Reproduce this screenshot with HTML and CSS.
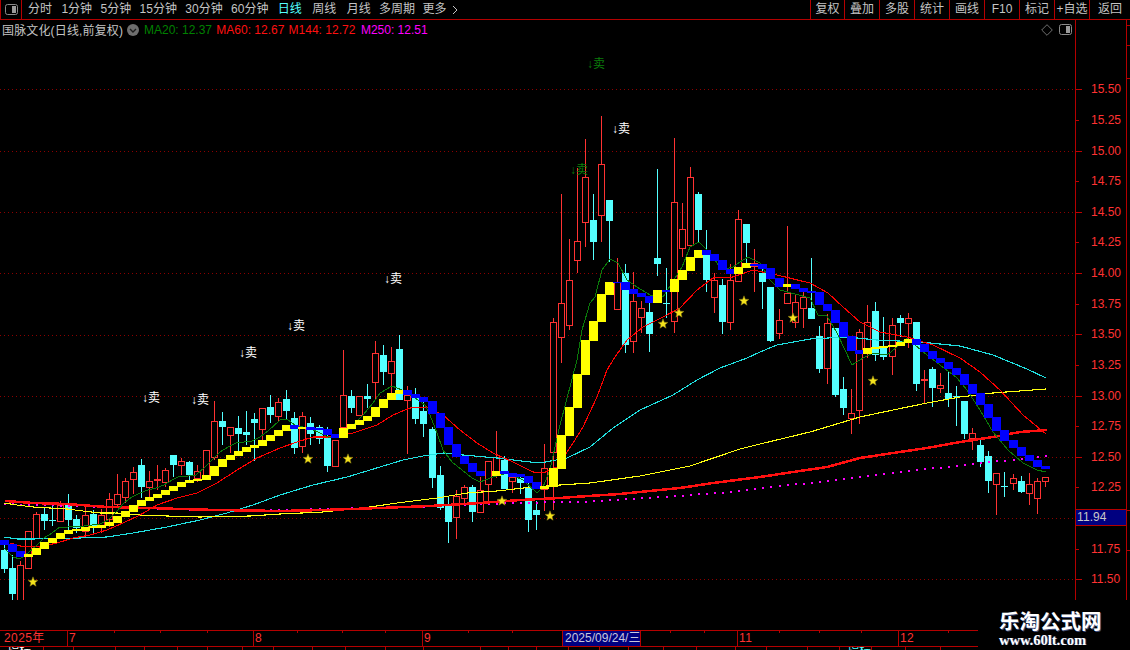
FILE: index.html
```html
<!DOCTYPE html>
<html lang="zh-CN">
<head>
<meta charset="utf-8">
<title>国脉文化 日线</title>
<link rel="stylesheet" href="styles.css">
</head>
<body>
<div class="app">
  <header class="toolbar">
    <div class="panel-cell">
      <svg class="toggle" viewBox="0 0 13 11"><rect x="0.5" y="0.5" width="12" height="10" rx="2" class="toggle-frame"/><rect x="7" y="2" width="4" height="7" class="toggle-fill"/></svg>
    </div>
    <nav class="periods">
      <span class="tab first">分时</span>
      <span class="tab">1分钟</span>
      <span class="tab">5分钟</span>
      <span class="tab">15分钟</span>
      <span class="tab">30分钟</span>
      <span class="tab">60分钟</span>
      <span class="tab active">日线</span>
      <span class="tab apart">周线</span>
      <span class="tab apart">月线</span>
      <span class="tab">多周期</span>
      <span class="tab near">更多</span>
      <svg class="more" viewBox="0 0 6 10"><path d="M1 1l4 4-4 4"/></svg>
    </nav>
    <div class="tools">
      <span class="tool narrow">复权</span>
      <span class="tool">叠加</span>
      <span class="tool">多股</span>
      <span class="tool">统计</span>
      <span class="tool">画线</span>
      <span class="tool">F10</span>
      <span class="tool">标记</span>
      <span class="tool">+自选</span>
      <span class="tool last">返回</span>
    </div>
  </header>

  <main class="main">
    <section class="plot">
      <svg id="chart" class="chart" viewBox="0 20 1075 580">
        <g class="sell">
          <text x="142" y="402">↓卖</text>
          <text x="191" y="404">↓卖</text>
          <text x="239" y="357">↓卖</text>
          <text x="287" y="330">↓卖</text>
          <text x="384" y="283">↓卖</text>
          <text x="612" y="133">↓卖</text>
        </g>
        <g class="sell dim">
          <text x="587" y="68">↓卖</text>
          <text x="570" y="174">↓卖</text>
        </g>
      </svg>
      <div class="info">
        <span class="name">国脉文化(日线,前复权)</span>
        <svg class="chevron" viewBox="0 0 12 12"><circle cx="6" cy="6" r="6" class="chevron-disc"/><path d="M3 5l3 3 3-3" class="chevron-mark"/></svg>
        <span class="ma green">MA20: 12.37</span>
        <span class="ma red">MA60: 12.67</span>
        <span class="ma red">M144: 12.72</span>
        <span class="ma pink">M250: 12.51</span>
        <svg class="diamond" viewBox="0 0 12 12"><path d="M6 .7L11.3 6 6 11.3.7 6z"/></svg>
        <svg class="toggle small" viewBox="0 0 13 11"><rect x="0.5" y="0.5" width="12" height="10" rx="2" class="toggle-frame"/><rect x="7" y="2" width="4" height="7" class="toggle-fill"/></svg>
      </div>
    </section>
    <aside class="axis">
      <span class="price major">15.50</span>
      <span class="price">15.25</span>
      <span class="price major">15.00</span>
      <span class="price">14.75</span>
      <span class="price major">14.50</span>
      <span class="price">14.25</span>
      <span class="price major">14.00</span>
      <span class="price">13.75</span>
      <span class="price major">13.50</span>
      <span class="price">13.25</span>
      <span class="price major">13.00</span>
      <span class="price">12.75</span>
      <span class="price major">12.50</span>
      <span class="price">12.25</span>
      <span class="price major"></span>
      <span class="price">11.75</span>
      <span class="price major">11.50</span>
      <span class="cursor-price">11.94</span>
    </aside>
    <div class="strip"></div>
  </main>

  <footer class="footer">
    <div class="timeline">
      <div id="dates" class="dates">
        <span class="date year">2025年</span>
        <span class="date m7">7</span>
        <span class="date m8">8</span>
        <span class="date m9">9</span>
        <span class="date current">2025/09/24/三</span>
        <span class="date gap"></span>
        <span class="date m11">11</span>
        <span class="date m12">12</span>
      </div>
      <div id="tabs" class="tabs"></div>
    </div>
    <div class="watermark">
      <div class="mark-name">乐淘公式网</div>
      <div class="mark-url">www.60lt.com</div>
    </div>
  </footer>
</div>
<script src="chart.js"></script>
</body>
</html>
```
FILE: styles.css
```css
* { box-sizing: border-box; }
html, body { margin: 0; padding: 0; background: #000; }
body { width: 1130px; height: 650px; overflow: hidden; font-family: "Liberation Sans", "Noto Sans CJK SC", sans-serif; font-size: 12px; color: #c4c4c4; }
.app { display: flex; flex-direction: column; width: 1130px; height: 650px; }

.toolbar { display: flex; align-items: stretch; height: 20px; border-bottom: 1px solid #b40000; line-height: 19px; flex: none; }
.panel-cell { width: 22px; border-left: 1px solid #b40000; border-right: 1px solid #b40000; display: flex; align-items: center; justify-content: center; }
.toggle { width: 13px; height: 11px; display: block; }
.toggle-frame { fill: none; stroke: #8a8a8a; }
.toggle-fill { fill: #9a9a9a; }
.periods { display: flex; align-items: center; gap: 8.4px; padding-left: 6px; }
.tab { white-space: nowrap; }
.tab.first { margin-right: 1px; }
.tab.active { color: #54ffff; margin-left: 1px; }
.tab.apart { margin-left: 2px; }
.tab.near { margin-left: -1px; }
.more { width: 6px; height: 10px; margin-left: -3px; }
.more path { fill: none; stroke: #c4c4c4; }
.tools { display: flex; margin-left: auto; }
.tool { width: 35px; border-left: 1px solid #b40000; text-align: center; white-space: nowrap; }
.tool.narrow { width: 34px; }
.tool.last { width: 41px; }

.main { display: flex; height: 580px; flex: none; }
.plot { position: relative; width: 1075px; flex: none; }
.chart { display: block; width: 1075px; height: 580px; }
.sell text { font-family: "Liberation Sans", "Noto Sans CJK SC", sans-serif; font-size: 12px; fill: #fff; }
.sell.dim text { fill: #0b7d0b; }
.info { position: absolute; left: 0; top: 0; right: 0; height: 19px; display: flex; align-items: center; padding: 0 3px 0 2px; }
.name { white-space: nowrap; width: 125px; letter-spacing: .15px; }
.chevron { width: 12px; height: 12px; margin-right: 5px; }
.chevron-disc { fill: #6e6e6e; }
.chevron-mark { fill: none; stroke: #1c1c1c; stroke-width: 1.4; }
.ma { white-space: nowrap; width: 72.3px; }
.green { color: #008000; }
.red { color: #ff1010; }
.pink { color: #ff00ff; }
.diamond { width: 12px; height: 12px; margin-left: auto; margin-right: 6px; }
.diamond path { fill: none; stroke: #707070; }

.axis { position: relative; width: 51px; flex: none; border-left: 1px solid #b40000; padding-top: 54.3px; display: flex; flex-direction: column; }
.price { position: relative; height: 30.625px; flex: none; line-height: 30.625px; color: #ff3232; padding-left: 15px; }
.price::before { content: ""; position: absolute; left: 0; top: 15px; width: 3px; height: 1px; background: #c00000; }
.price.major::before { width: 6px; }
.cursor-price { position: absolute; left: 0; top: 489px; width: 50px; height: 17px; line-height: 15px; padding-left: 1px; background: #000080; border-top: 1px solid #b40000; border-bottom: 1px solid #b40000; color: #c8c8c8; letter-spacing: .1px; }
.strip { width: 4px; flex: none; border-left: 1px solid #b40000; background: linear-gradient(#b40000, #b40000) 0 5px / 4px 1px no-repeat, linear-gradient(#b40000, #b40000) 0 25px / 4px 1px no-repeat, linear-gradient(#b40000, #b40000) 0 58px / 4px 1px no-repeat, linear-gradient(#b40000, #b40000) 0 490px / 4px 1px no-repeat, linear-gradient(#b40000, #b40000) 0 530px / 4px 1px no-repeat; }

.footer { display: flex; flex: 1; min-height: 0; }
.timeline { width: 978px; flex: none; padding-top: 30px; display: flex; flex-direction: column; }
.dates { position: relative; display: flex; height: 17px; border-top: 1px solid #b40000; border-bottom: 1px solid #b40000; color: #ff3232; line-height: 15px; flex: none; }
.date { flex: none; padding-left: 1px; border-right: 1px solid #b40000; white-space: nowrap; letter-spacing: .4px; }
.year { width: 68px; padding-left: 4px; }
.m7 { width: 186px; }
.m8 { width: 169px; }
.m9 { width: 140px; }
.current { width: 79px; background: #000080; color: #c8c8dc; border-left: 1px solid #b40000; padding-left: 2px; letter-spacing: 0; margin-left: -1px; }
.gap { width: 97px; }
.m11 { width: 161px; }
.m12 { flex: 1; border-right: 0; }
.date-tick { position: absolute; top: 0; width: 1px; height: 2px; background: #b40000; }
.tabs { display: flex; flex: 1; overflow: hidden; min-height: 0; }
.bar-tab { flex: none; height: 3px; border-right: 1px solid #b40000; overflow: hidden; line-height: 8px; color: #fff; padding-left: 7px; white-space: nowrap; }
.bar-tab.cyan { color: #54ffff; }

.watermark { flex: 1; background: #000; padding: 8px 0 0 21px; color: #fff; }
.mark-name { font-family: "Noto Sans CJK SC", sans-serif; font-weight: 700; font-size: 20.5px; line-height: 24px; text-shadow: 1px 1px 0 #3a4a78; white-space: nowrap; }
.mark-url { font-family: "Liberation Serif", serif; font-weight: 700; font-size: 14.5px; line-height: 16px; text-shadow: 1px 0 0 #3a4a78; white-space: nowrap; }

/* chart marks drawn by chart.js */
.grid { stroke: #8c0000; stroke-width: 1; stroke-dasharray: 1 3; shape-rendering: crispEdges; }
.wick-up { fill: #ff3232; }
.body-up { fill: #000; stroke: #ff3232; stroke-width: 1; }
.cand-down { fill: #54ffff; }
.line { fill: none; shape-rendering: crispEdges; }
.l-green { stroke: #0a7a0a; stroke-width: 1; }
.l-red { stroke: #ff0000; stroke-width: 1.1; }
.l-cyan { stroke: #20e0e0; stroke-width: 1.1; }
.l-yellow { stroke: #ffff10; stroke-width: 1.1; }
.l-thick { stroke: #ff1010; stroke-width: 2.5; }
.dot { fill: #ff00ff; }
.step-y { fill: #ffff00; }
.step-b { fill: #0000ff; }
.star { fill: #f4e31c; stroke: #8a7a10; stroke-width: .5; }
```
FILE: chart.js
```js
// 日K线数据: [类型, 上影, 实体上, 实体下, 下影] (像素坐标)
const candles = [
['c',545,550,569,573],['c',555,568,594,603],['r',561,565,608,608],['r',531,531,569,569],['r',512,514,539,539],
['c',507,514,521,530],['c',506,520,521,526],['r',501,505,522,522],['c',494,505,520,530],['c',515,519,528,533],
['r',505,515,532,537],['c',510,514,527,533],['r',509,515,528,533],['r',493,499,520,527],['r',474,494,505,508],
['r',478,481,498,503],['r',467,472,480,494],['c',459,465,487,498],['r',471,481,488,498],['r',465,479,481,490],
['r',468,470,483,487],['c',455,455,465,477],['r',458,461,466,475],['c',461,462,475,483],['r',465,471,479,482],
['r',450,450,477,480],['r',401,421,458,460],['c',412,421,427,445],['r',427,427,436,453],['c',416,428,434,452],
['c',411,432,435,445],['c',413,419,423,461],['r',408,408,430,440],['c',395,407,415,423],['r',398,402,417,422],
['c',390,399,411,420],['c',412,418,448,454],['r',412,416,447,453],['c',417,423,434,445],['c',425,427,439,444],
['c',427,438,466,472],['r',440,440,467,467],['r',350,395,428,428],['c',390,396,408,413],['r',396,396,416,416],
['c',384,396,399,408],['r',341,353,383,399],['c',345,355,372,385],['r',347,361,374,393],['c',335,349,400,400],
['r',386,395,401,454],['c',388,398,419,424],['c',402,411,424,437],['c',427,429,478,488],['c',466,475,508,510],
['c',496,506,522,543],['r',490,496,518,539],['r',485,487,499,506],['c',485,487,512,522],['r',477,490,513,513],
['r',461,461,485,505],['r',431,457,475,478],['c',456,460,489,489],['r',475,477,482,493],['c',475,478,483,494],
['c',483,487,520,532],['c',501,510,515,530],['r',444,468,490,511],['r',318,322,453,510],['r',194,303,338,363],
['r',239,280,326,330],['r',168,241,261,273],['r',139,177,223,247],['c',194,220,242,260],['r',116,164,216,242],
['c',200,200,221,262],['r',258,282,310,310],['c',264,273,345,353],['r',272,301,342,353],['r',301,308,318,333],
['c',303,312,334,352],['c',169,258,264,276],['c',268,303,304,318],['r',138,202,322,333],['r',203,229,249,257],
['r',167,177,246,246],['c',192,194,230,242],['c',230,255,280,292],['r',273,280,298,313],['c',279,285,322,334],
['r',264,280,323,330],['r',210,219,282,282],['c',224,224,243,267],['r',249,263,267,292],['c',268,273,282,309],
['c',287,287,341,342],['r',309,320,334,339],['r',226,293,304,304],['r',295,302,323,328],['r',292,297,309,328],
['c',258,308,319,319],['c',326,336,369,373],['r',314,323,369,384],['c',328,328,395,397],['c',377,389,408,415],
['r',389,413,419,434],['r',329,332,411,424],['r',305,322,353,358],['c',302,311,355,361],['c',317,348,357,360],
['r',318,325,357,375],['c',315,318,323,337],['r',313,318,324,348],['c',322,322,384,391],['r',370,379,381,404],
['c',367,369,388,407],['r',373,385,389,393],['c',372,393,399,407],['c',386,396,397,426],['c',401,401,434,439],
['r',428,433,439,450],['c',440,445,462,467],['c',451,456,481,493],['r',473,473,485,515],['c',472,486,487,497],
['r',474,478,484,490],['c',476,481,492,493],['r',473,484,494,505],['r',478,481,499,514],['r',477,477,482,487]
];

// 阶梯带: [上, 下, 颜色]
const steps = [
[540,545,'b'],[544,552,'b'],[551,557,'b'],[554,557,'y'],[548,555,'y'],[542,549,'y'],[538,543,'y'],[533,539,'y'],[530,534,'y'],[529,531,'y'],
[527,531,'y'],[526,528,'y'],[525,528,'y'],[522,526,'y'],[516,523,'y'],[511,517,'y'],[505,512,'y'],[500,506,'y'],[497,501,'y'],[494,498,'y'],
[490,495,'y'],[486,491,'y'],[482,487,'y'],[480,483,'y'],[479,481,'y'],[475,480,'y'],[466,476,'y'],[459,467,'y'],[455,460,'y'],[451,456,'y'],
[447,452,'y'],[445,448,'y'],[440,446,'y'],[435,441,'y'],[430,436,'y'],[425,431,'y'],[425,429,'b'],[427,429,'y'],[427,430,'b'],[428,430,'b'],
[429,435,'b'],[434,438,'b'],[428,438,'y'],[424,429,'y'],[420,425,'y'],[416,421,'y'],[407,417,'y'],[399,408,'y'],[393,400,'y'],[390,394,'y'],
[390,395,'b'],[394,398,'b'],[397,402,'b'],[401,414,'b'],[413,428,'b'],[427,445,'b'],[444,457,'b'],[456,464,'b'],[463,472,'b'],[471,476,'b'],
null,[471,476,'y'],[471,474,'b'],[473,477,'b'],[474,477,'b'],[476,483,'b'],[482,489,'b'],[486,489,'y'],[468,487,'y'],[435,469,'y'],
[407,436,'y'],[374,408,'y'],[340,375,'y'],[321,341,'y'],[294,322,'y'],[282,295,'y'],[282,283,'b'],[282,290,'b'],[289,294,'b'],[293,297,'b'],
[296,303,'b'],[290,303,'y'],[290,292,'b'],[279,292,'y'],[270,280,'y'],[257,271,'y'],[250,258,'y'],[250,255,'b'],[254,261,'b'],[260,270,'b'],
[269,274,'b'],[267,274,'y'],[263,268,'y'],[264,266,'b'],[264,269,'b'],[268,279,'b'],[278,287,'b'],[284,287,'y'],[284,289,'b'],[288,292,'b'],
[291,293,'b'],[292,305,'b'],[304,311,'b'],[310,323,'b'],[322,337,'b'],[336,351,'b'],[350,354,'b'],[348,354,'y'],[347,349,'y'],[346,348,'y'],
[345,347,'y'],[342,346,'y'],[339,343,'y'],[339,345,'b'],[344,352,'b'],[351,359,'b'],[358,363,'b'],[362,369,'b'],[368,375,'b'],[374,385,'b'],
[384,394,'b'],[393,405,'b'],[404,418,'b'],[417,431,'b'],[430,441,'b'],[440,448,'b'],[447,456,'b'],[455,461,'b'],[460,467,'b'],[466,469,'b']
];

const lines = {
  'l-cyan': [[4,537],[17,539],[33,539],[80,538],[107,537],[133,533],[167,527],[200,520],[227,513],[253,505],[280,495],[313,485],[347,477],[380,467],[403,460],[423,456],[443,453],[463,455],[497,458],[530,462],[540,463],[567,458],[590,447],[613,428],[640,410],[673,395],[697,380],[720,368],[747,358],[760,352],[777,345],[810,339],[847,337],[877,340],[920,342],[960,346],[993,355],[1027,369],[1046,378]],
  'l-yellow': [[4,503],[17,505],[33,507],[50,508],[67,509],[83,511],[100,513],[117,513],[140,515],[167,516],[200,517],[250,516],[280,514],[323,512],[363,508],[397,503],[437,498],[467,493],[497,491],[533,487],[560,485],[590,483],[640,476],[690,466],[740,449],[760,444],[810,432],[860,417],[893,410],[927,403],[960,397],[993,393],[1046,389]],
  'l-thick': [[5,501],[33,503],[67,504],[107,507],[150,508],[180,509],[217,510],[280,511],[323,510],[380,508],[430,506],[480,503],[520,500],[560,498],[573,497],[620,494],[680,488],[713,483],[760,477],[793,472],[827,467],[860,458],[893,453],[927,448],[960,442],[993,437],[1020,432],[1047,430]],
  'l-red': [[10,543],[20,546],[40,547],[57,543],[73,538],[90,535],[107,530],[123,523],[140,515],[157,505],[177,498],[197,493],[217,483],[237,470],[257,458],[280,448],[297,442],[313,437],[333,437],[353,433],[377,425],[393,415],[410,408],[427,407],[443,415],[460,430],[477,443],[493,453],[513,462],[533,472],[543,473],[557,467],[573,443],[583,427],[597,397],[607,370],[615,357],[627,340],[643,327],[663,317],[680,308],[697,290],[713,278],[733,277],[753,270],[777,275],[810,283],[828,293],[843,307],[860,322],[880,332],[907,337],[933,345],[960,358],[980,372],[1000,390],[1023,415],[1046,434]],
  'l-green': [[4,548],[13,557],[20,559],[28,553],[37,545],[44,538],[52,533],[60,527],[68,527],[76,526],[84,526],[92,525],[100,524],[108,520],[116,512],[124,503],[132,497],[140,493],[148,490],[156,488],[164,485],[172,480],[180,476],[188,476],[196,475],[204,468],[212,460],[220,452],[228,447],[236,443],[244,442],[252,441],[260,437],[268,431],[280,420],[287,419],[295,425],[311,429],[320,433],[328,437],[335,438],[350,428],[363,415],[373,403],[380,393],[392,386],[402,390],[415,398],[425,405],[430,415],[437,433],[443,450],[452,462],[462,470],[472,478],[480,482],[493,477],[507,473],[523,480],[537,493],[543,487],[550,470],[555,447],[560,425],[577,360],[582,330],[590,303],[595,297],[602,270],[610,259],[618,263],[627,280],[637,287],[650,295],[663,297],[672,283],[682,267],[690,247],[699,242],[710,253],[722,270],[733,267],[740,262],[748,257],[760,263],[770,280],[780,290],[810,298],[818,315],[827,316],[837,333],[852,365],[863,358],[873,353],[887,355],[897,347],[907,338],[915,345],[927,355],[940,365],[957,378],[967,390],[980,410],[993,432],[1008,450],[1023,463],[1037,470],[1046,472]]
};

const dotLine = [[3,503],[200,509],[280,509],[413,506],[480,503],[513,502],[560,501],[577,501],[633,498],[690,494],[730,491],[762,487],[827,480],[900,471],[973,463],[1046,455]];
const stars = [[33,582],[308,459],[348,459],[502,501],[550,516],[663,324],[679,313],[744,301],[793,318],[873,381]];
const grid = [89,151,212,273,335,396,457,518,579];

const NS = 'http://www.w3.org/2000/svg';
const svg = document.getElementById('chart');
const firstText = svg.firstElementChild;
function add(tag, cls, attrs) {
  const el = document.createElementNS(NS, tag);
  el.setAttribute('class', cls);
  for (const k in attrs) el.setAttribute(k, attrs[k]);
  svg.insertBefore(el, firstText);
  return el;
}
const barX = i => Math.floor(4.3 + 8.07 * i);

grid.forEach(y => add('line', 'grid', { x1: 0, x2: 1075, y1: y + .5, y2: y + .5 }));

candles.forEach((c, i) => {
  const x = barX(i), [t, wt, bt, bb, wb] = c;
  if (t === 'r') {
    add('rect', 'wick-up', { x, y: wt, width: 1, height: Math.max(0, bt - wt) });
    add('rect', 'wick-up', { x, y: bb, width: 1, height: Math.max(0, wb - bb) });
    add('rect', 'body-up', { x: x - 2.5, y: bt + .5, width: 6, height: Math.max(1, bb - bt - 1) });
  } else {
    add('rect', 'cand-down', { x, y: wt, width: 1, height: wb - wt });
    add('rect', 'cand-down', { x: x - 3, y: bt, width: 7, height: Math.max(1, bb - bt) });
  }
});

function interp(pts, x) {
  for (let k = 1; k < pts.length; k++) {
    if (x <= pts[k][0]) {
      const a = pts[k - 1], b = pts[k];
      return a[1] + (b[1] - a[1]) * (x - a[0]) / (b[0] - a[0]);
    }
  }
  return pts[pts.length - 1][1];
}
candles.forEach((c, i) => {
  const x = barX(i);
  add('rect', 'dot', { x, y: Math.round(interp(dotLine, x)), width: 2, height: 2 });
});
Object.keys(lines).forEach(cls => {
  add('polyline', 'line ' + cls, { points: lines[cls].map(p => p.join(',')).join(' ') });
});

steps.forEach((s, i) => {
  if (!s) return;
  add('rect', s[2] === 'y' ? 'step-y' : 'step-b', { x: barX(i) - 4, y: s[0], width: 9, height: s[1] - s[0] });
});

stars.forEach(([cx, cy]) => {
  const pts = [];
  for (let k = 0; k < 10; k++) {
    const r = k % 2 ? 2.2 : 5.2, a = -Math.PI / 2 + k * Math.PI / 5;
    pts.push((cx + r * Math.cos(a)).toFixed(1) + ',' + (cy + r * Math.sin(a)).toFixed(1));
  }
  add('polygon', 'star', { points: pts.join(' ') });
});

// 时间轴小刻度
const dates = document.getElementById('dates');
[114, 160, 207, 297, 342, 385, 468, 512, 670, 704, 779, 819, 861, 948].forEach(x => {
  const t = document.createElement('i');
  t.className = 'date-tick';
  t.style.left = x + 'px';
  dates.appendChild(t);
});

// 底部指标页签
const tabEnds = [43, 73, 115, 144, 177, 207, 242, 273, 312, 345, 385, 423, 480, 508, 536, 568, 599, 628, 663, 696, 735, 766, 807, 839, 871, 905, 940];
const tabs = document.getElementById('tabs');
let prev = 0;
tabEnds.forEach((x, i) => {
  const t = document.createElement('div');
  t.className = 'bar-tab' + (i === 24 ? ' cyan' : '');
  t.style.width = (x + 1 - prev) + 'px';
  if (i === 0) t.textContent = '指标';
  if (i === 24) t.textContent = '指标';
  tabs.appendChild(t);
  prev = x + 1;
});
```
